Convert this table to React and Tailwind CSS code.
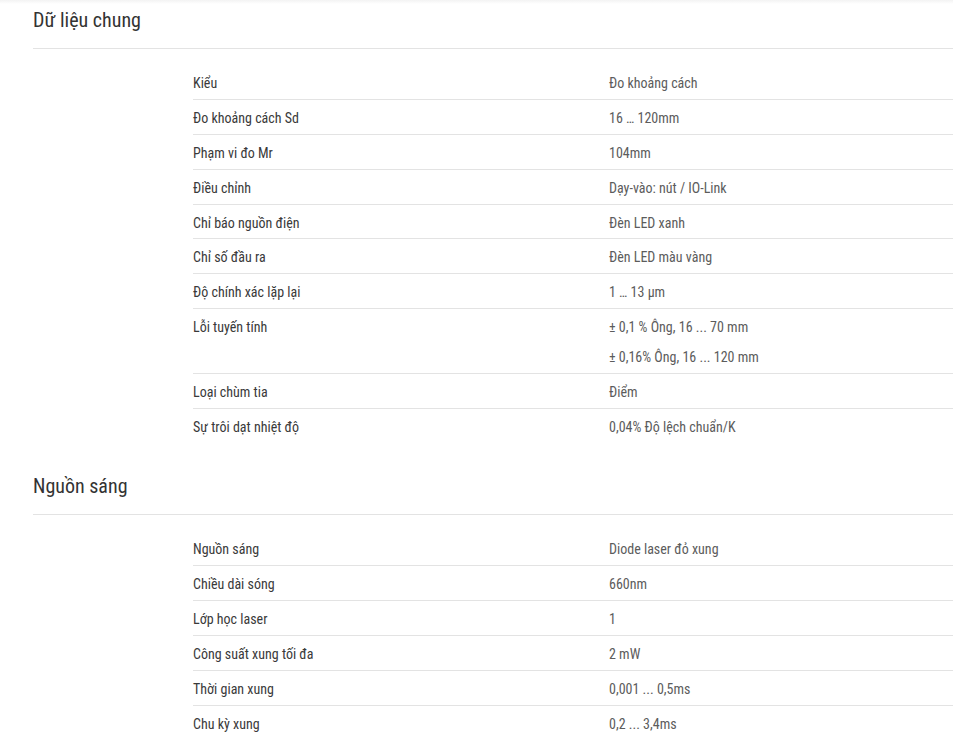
import React from "react";

const sections = [
  {
    title: "Dữ liệu chung",
    rows: [
      ["Kiểu", ["Đo khoảng cách"]],
      ["Đo khoảng cách Sd", ["16 … 120mm"]],
      ["Phạm vi đo Mr", ["104mm"]],
      ["Điều chỉnh", ["Dạy-vào: nút / IO-Link"]],
      ["Chỉ báo nguồn điện", ["Đèn LED xanh"]],
      ["Chỉ số đầu ra", ["Đèn LED màu vàng"]],
      ["Độ chính xác lặp lại", ["1 … 13 µm"]],
      ["Lỗi tuyến tính", ["± 0,1 % Ông, 16 ... 70 mm", "± 0,16% Ông, 16 ... 120 mm"]],
      ["Loại chùm tia", ["Điểm"]],
      ["Sự trôi dạt nhiệt độ", ["0,04% Độ lệch chuẩn/K"]],
    ],
  },
  {
    title: "Nguồn sáng",
    rows: [
      ["Nguồn sáng", ["Diode laser đỏ xung"]],
      ["Chiều dài sóng", ["660nm"]],
      ["Lớp học laser", ["1"]],
      ["Công suất xung tối đa", ["2 mW"]],
      ["Thời gian xung", ["0,001 ... 0,5ms"]],
      ["Chu kỳ xung", ["0,2 ... 3,4ms"]],
    ],
  },
];

function SpecTable({ rows, tight }) {
  return (
    <div className="ml-[160px] mt-4">
      {rows.map(([label, values], i) => (
        <div
          key={label}
          className={`flex pt-[8px] ${tight ? "pb-[5.9px]" : "pb-[6px]"} text-[14px] leading-5 ${i < rows.length - 1 ? "border-b border-[#e3e3e3]" : ""}`}
        >
          <div className="w-[416px] shrink-0 text-[#3a3a3a]">{label}</div>
          <div className="flex flex-col gap-[10px] text-[#5c5c5c]">
            {values.map((v) => (
              <span key={v}>{v}</span>
            ))}
          </div>
        </div>
      ))}
    </div>
  );
}

export default function App() {
  return (
    <div
      className="min-h-[740px] bg-white"
      style={{ fontFamily: '"Roboto Condensed", Roboto, "Liberation Sans", sans-serif' }}
    >
      <div className="h-[4px] bg-gradient-to-b from-[#f3f3f3] to-white" />
      <div className="pl-[33px]">
        {sections.map((s, i) => (
          <section key={s.title} className={i > 0 ? "mt-[29px]" : ""}>
            <h2 className={`border-b border-[#e3e3e3] pb-[14px] text-[20px] leading-7 text-[#333] ${i === 0 ? "pt-[2px]" : ""}`}>
              {s.title}
            </h2>
            <SpecTable rows={s.rows} tight={i === 0} />
          </section>
        ))}
      </div>
    </div>
  );
}
